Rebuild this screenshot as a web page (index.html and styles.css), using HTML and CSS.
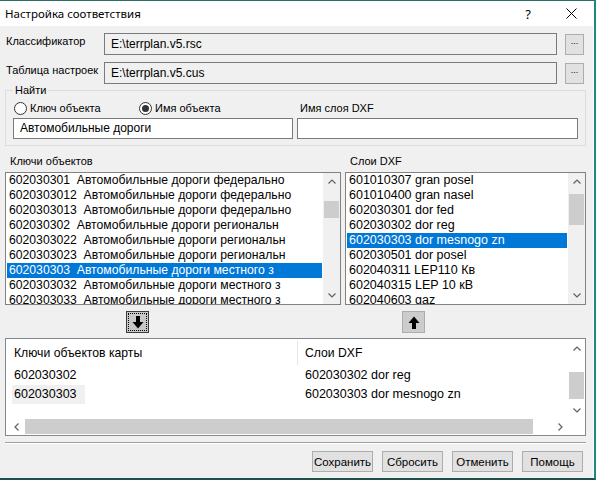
FILE: index.html
```html
<!DOCTYPE html>
<html>
<head>
<meta charset="utf-8">
<link rel="stylesheet" href="styles.css">
</head>
<body>
<div class="window">
  <div class="titlebar">
    <span class="title">Настройка соответствия</span>
    <span class="help">?</span>
    <span class="close"><svg width="11" height="11" viewBox="0 0 11 11"><path d="M0.5 0.5L10.5 10.5M10.5 0.5L0.5 10.5" stroke="#000" stroke-width="1"/></svg></span>
  </div>
  <div class="content">
    <div class="fields">
      <div class="field-row">
        <span class="field-label">Классификатор</span>
        <div class="field-input">E:\terrplan.v5.rsc</div>
        <button class="browse">...</button>
      </div>
      <div class="field-row">
        <span class="field-label">Таблица настроек</span>
        <div class="field-input">E:\terrplan.v5.cus</div>
        <button class="browse">...</button>
      </div>
    </div>

    <fieldset class="group">
      <legend>Найти</legend>
      <div class="group-grid">
        <div class="radio-row">
          <label class="radio first"><span class="circle"></span>Ключ объекта</label>
          <label class="radio"><span class="circle checked"></span>Имя объекта</label>
        </div>
        <div class="layer-label">Имя слоя DXF</div>
        <div class="text-input">Автомобильные дороги</div>
        <div class="text-input"></div>
      </div>
    </fieldset>

    <div class="list-labels">
      <span class="ll-left">Ключи объектов</span>
      <span class="ll-right">Слои DXF</span>
    </div>

    <div class="lists">
      <div class="listbox left">
        <div class="items">
          <div class="item">602030301  Автомобильные дороги федерально</div>
          <div class="item">6020303012  Автомобильные дороги федерально</div>
          <div class="item">6020303013  Автомобильные дороги федерально</div>
          <div class="item">602030302  Автомобильные дороги региональн</div>
          <div class="item">6020303022  Автомобильные дороги региональн</div>
          <div class="item">6020303023  Автомобильные дороги региональн</div>
          <div class="item selected">602030303  Автомобильные дороги местного з</div>
          <div class="item">6020303032  Автомобильные дороги местного з</div>
          <div class="item">6020303033  Автомобильные дороги местного з</div>
        </div>
        <div class="vscroll">
          <div class="arrow"><svg width="8" height="5" viewBox="0 0 8 5"><path d="M0.5 4.5L4 1L7.5 4.5" fill="none" stroke="#606060" stroke-width="1.2"/></svg></div>
          <div class="track"><div class="thumb thumb-left"></div></div>
          <div class="arrow"><svg width="8" height="5" viewBox="0 0 8 5"><path d="M0.5 0.5L4 4L7.5 0.5" fill="none" stroke="#606060" stroke-width="1.2"/></svg></div>
        </div>
      </div>
      <div class="listbox right">
        <div class="items">
          <div class="item">601010307 gran posel</div>
          <div class="item">601010400 gran nasel</div>
          <div class="item">602030301 dor fed</div>
          <div class="item">602030302 dor reg</div>
          <div class="item selected">602030303 dor mesnogo zn</div>
          <div class="item">602030501 dor posel</div>
          <div class="item">602040311 LEP110 Кв</div>
          <div class="item">602040315 LEP 10 кВ</div>
          <div class="item">602040603 gaz</div>
        </div>
        <div class="vscroll">
          <div class="arrow"><svg width="8" height="5" viewBox="0 0 8 5"><path d="M0.5 4.5L4 1L7.5 4.5" fill="none" stroke="#606060" stroke-width="1.2"/></svg></div>
          <div class="track"><div class="thumb thumb-right"></div></div>
          <div class="arrow"><svg width="8" height="5" viewBox="0 0 8 5"><path d="M0.5 0.5L4 4L7.5 0.5" fill="none" stroke="#606060" stroke-width="1.2"/></svg></div>
        </div>
      </div>
    </div>

    <div class="transfer">
      <button class="move down"><span class="focus"><svg width="12" height="13" viewBox="0 0 12 13"><path d="M4 0H8V6H11.5L6 12.5L0.5 6H4Z" fill="#000"/></svg></span></button>
      <button class="move up"><svg width="12" height="13" viewBox="0 0 12 13"><path d="M4 13H8V7H11.5L6 0.5L0.5 7H4Z" fill="#000"/></svg></button>
    </div>

    <div class="listview">
      <div class="lv-main">
        <div class="lv-header">
          <div class="lv-col c1">Ключи объектов карты</div>
          <div class="lv-col c2">Слои DXF</div>
        </div>
        <div class="lv-row">
          <div class="lv-cell c1"><span>602030302</span></div>
          <div class="lv-cell c2"><span>602030302 dor reg</span></div>
        </div>
        <div class="lv-row">
          <div class="lv-cell c1"><span class="sel">602030303</span></div>
          <div class="lv-cell c2"><span>602030303 dor mesnogo zn</span></div>
        </div>
      </div>
      <div class="lv-vscroll">
        <div class="arrow"><svg width="8" height="5" viewBox="0 0 8 5"><path d="M0.5 4.5L4 1L7.5 4.5" fill="none" stroke="#606060" stroke-width="1.2"/></svg></div>
        <div class="track"><div class="thumb lv-vthumb"></div></div>
        <div class="arrow"><svg width="8" height="5" viewBox="0 0 8 5"><path d="M0.5 0.5L4 4L7.5 0.5" fill="none" stroke="#606060" stroke-width="1.2"/></svg></div>
      </div>
      <div class="lv-hscroll">
        <div class="harrow"><svg width="5" height="8" viewBox="0 0 5 8"><path d="M4.5 0.5L1 4L4.5 7.5" fill="none" stroke="#606060" stroke-width="1.2"/></svg></div>
        <div class="htrack"><div class="hthumb"></div></div>
        <div class="harrow"><svg width="5" height="8" viewBox="0 0 5 8"><path d="M0.5 0.5L4 4L0.5 7.5" fill="none" stroke="#606060" stroke-width="1.2"/></svg></div>
      </div>
      <div class="lv-corner"></div>
    </div>

    <div class="separator"></div>

    <div class="footer">
      <button class="btn">Сохранить</button>
      <button class="btn">Сбросить</button>
      <button class="btn">Отменить</button>
      <button class="btn">Помощь</button>
    </div>
  </div>
</div>
</body>
</html>
```
FILE: styles.css
```css
* { box-sizing: border-box; }
html, body { margin: 0; padding: 0; background: #f0f0f0; }
body {
  font-family: "Liberation Sans", Arial, sans-serif;
  font-size: 11px;
  color: #000;
}
button { font-family: inherit; margin: 0; padding: 0; }

.window {
  width: 596px;
  height: 480px;
  background: #f0f0f0;
  border-top: 1px solid #2b6e6a;
  border-right: 2px solid #1a8a83;
  border-bottom: 2px solid #1f4f48;
  box-shadow: inset -1px 0 0 #ffffff;
  display: flex;
  flex-direction: column;
  overflow: hidden;
}

/* title bar */
.titlebar {
  height: 25px;
  background: #fff;
  display: flex;
  align-items: center;
  padding-left: 5px;
  flex-shrink: 0;
}
.title {
  font-family: "Noto Sans", "Open Sans", sans-serif;
  font-size: 11.5px;
  flex: 1;
}
.help {
  width: 20px;
  text-align: center;
  font-family: "Noto Sans", sans-serif;
  font-size: 13px;
}
.close {
  width: 46px;
  margin-left: 10px;
  display: flex;
  justify-content: center;
  align-items: center;
}

.content {
  display: flex;
  flex-direction: column;
  padding-top: 7px;
}

/* top fields */
.fields { display: flex; flex-direction: column; gap: 7px; }
.field-row {
  display: flex;
  align-items: center;
  height: 22px;
  padding-left: 6px;
}
.field-label {
  width: 98px;
  align-self: flex-start;
  line-height: 17px;
  white-space: nowrap;
}
.field-input {
  width: 453px;
  height: 22px;
  border: 1px solid #7a7a7a;
  background: #f0f0f0;
  padding-left: 6px;
  line-height: 20px;
  font-size: 12px;
}
.browse {
  margin-left: 8px;
  width: 19px;
  height: 21px;
  background: #e1e1e1;
  border: 1px solid #adadad;
  font-size: 9px;
  line-height: 22px;
  color: #000;
  display: flex;
  justify-content: center;
  align-items: flex-end;
  padding-bottom: 2px;
}

/* group */
.group {
  margin: 0 0 0 5px;
  width: 581px;
  border: 1px solid #dcdcdc;
  padding: 0 7px 6px 7px;
  min-width: 0;
}
.group legend {
  padding: 0 2px;
  font-size: 11px;
  line-height: 12px;
}
.group-grid {
  display: grid;
  grid-template-columns: 280px 281px;
  column-gap: 4px;
  row-gap: 2px;
  margin-top: 4px;
}
.radio-row {
  display: flex;
  align-items: center;
  height: 16px;
}
.radio {
  display: flex;
  align-items: center;
  gap: 3px;
  white-space: nowrap;
}
.radio.first { width: 125px; }
.circle {
  width: 13px;
  height: 13px;
  margin-left: 1px;
  border-radius: 50%;
  border: 1px solid #333;
  background: #fff;
  position: relative;
  display: inline-block;
}
.circle.checked::after {
  content: "";
  position: absolute;
  left: 2px; top: 2px;
  width: 7px; height: 7px;
  border-radius: 50%;
  background: #333;
}
.layer-label {
  padding-left: 3px;
  line-height: 16px;
}
.text-input {
  height: 21px;
  border: 1px solid #7a7a7a;
  background: #fff;
  padding-left: 6px;
  line-height: 19px;
  font-size: 12px;
}

/* list labels */
.list-labels {
  display: flex;
  margin-top: 8px;
  margin-bottom: 4px;
  line-height: 14px;
}
.ll-left { margin-left: 10px; width: 340px; }

/* lists */
.lists {
  display: flex;
  gap: 4px;
  margin-left: 5px;
}
.listbox {
  height: 133px;
  border: 1px solid #828282;
  background: #fff;
  display: flex;
  overflow: hidden;
}
.listbox.left { width: 336px; }
.listbox.right { width: 241px; }
.items {
  flex: 1;
  padding: 0 1px;
  overflow: hidden;
  font-size: 12.5px;
}
.listbox.left .items { font-size: 12.2px; }
.item {
  height: 15px;
  line-height: 15px;
  padding-left: 2px;
  white-space: pre;
  overflow: hidden;
}
.item.selected { background: #0078d7; color: #fff; }

.vscroll {
  width: 17px;
  background: #f0f0f0;
  display: flex;
  flex-direction: column;
}
.arrow {
  height: 17px;
  display: flex;
  justify-content: center;
  align-items: center;
  flex-shrink: 0;
}
.track { flex: 1; }
.thumb {
  margin: 0 1px;
  background: #cdcdcd;
}
.thumb-left { margin-top: 11px; height: 17px; }
.thumb-right { margin-top: 4px; height: 31px; }

/* transfer buttons */
.transfer {
  display: flex;
  margin-top: 6px;
  height: 22px;
}
.move {
  width: 23px;
  height: 22px;
  display: flex;
  justify-content: center;
  align-items: center;
}
.move.down {
  margin-left: 126px;
  background: #c8c8c8;
  border: 1px solid #3c3c3c;
}
.move.down .focus {
  width: 19px;
  height: 18px;
  border: 1px dotted #000;
  display: flex;
  justify-content: center;
  align-items: center;
}
.move.up {
  margin-left: 253px;
  background: #cccccc;
  border: 1px solid #adadad;
}

/* list view */
.listview {
  margin-top: 5px;
  margin-left: 5px;
  width: 581px;
  height: 98px;
  border: 1px solid #828790;
  padding: 1px;
  background: #fff;
  display: grid;
  grid-template-columns: 1fr 15px;
  grid-template-rows: 1fr 15px;
}
.lv-main { overflow: hidden; }
.lv-header {
  display: flex;
  height: 26px;
  align-items: center;
}
.lv-col {
  line-height: 24px;
  font-size: 12.2px;
  white-space: nowrap;
}
.lv-col.c1 {
  width: 291px;
  padding-left: 7px;
  border-right: 1px solid #e5e5e5;
}
.lv-col.c2 { padding-left: 7px; }
.lv-row {
  display: flex;
  height: 19px;
  font-size: 12.5px;
}
.lv-cell { line-height: 19px; white-space: nowrap; }
.lv-cell.c1 { width: 292px; padding-left: 5px; }
.lv-cell.c1 span { padding: 0 2px; display: inline-block; }
.lv-cell.c1 span.sel { background: #f0f0f0; padding-right: 8px; }
.lv-cell.c2 { padding-left: 6px; }

.lv-vscroll {
  display: flex;
  flex-direction: column;
  background: #fff;
}
.lv-vthumb { margin: 15px 0 0 0; height: 27px; }
.lv-hscroll {
  display: flex;
  background: #fff;
}
.harrow {
  width: 18px;
  display: flex;
  justify-content: center;
  align-items: center;
  flex-shrink: 0;
}
.htrack { flex: 1; display: flex; }
.hthumb {
  width: 508px;
  height: 15px;
  background: #cdcdcd;
}
.lv-corner { background: #fff; }

/* separator and footer */
.separator {
  margin: 6px 0 0 5px;
  width: 581px;
  border-top: 1px solid #a0a0a0;
  border-bottom: 1px solid #fff;
}
.footer {
  display: flex;
  justify-content: flex-end;
  gap: 9px;
  padding-right: 11px;
  margin-top: 7px;
}
.btn {
  width: 61px;
  height: 21px;
  background: #e1e1e1;
  border: 1px solid #adadad;
  font-size: 11.5px;
  color: #000;
}
```
